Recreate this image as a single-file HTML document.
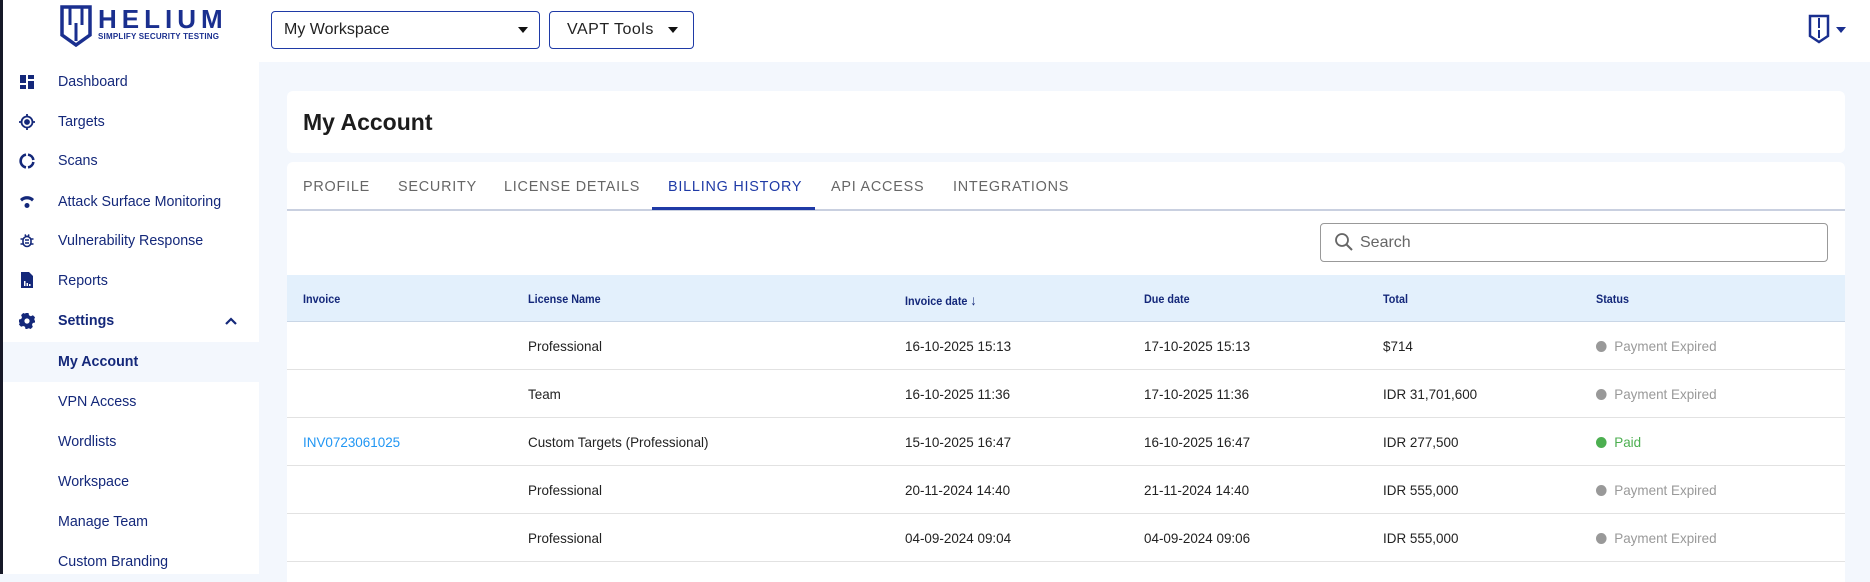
<!DOCTYPE html>
<html><head><meta charset="utf-8"><style>
*{box-sizing:border-box;margin:0;padding:0}
body{width:1870px;height:574px;overflow:hidden;background:#f3f7fd;font-family:"Liberation Sans",Arial,sans-serif;position:relative}
.abs{position:absolute}
#top{left:0;top:0;width:1870px;height:62px;background:#fff}
#side{left:0;top:62px;width:259px;height:512px;background:#fff}
#strip{left:0;top:0;width:3px;height:574px;background:#161827}
.nav{position:absolute;left:58px;font-size:15px;color:#14287a;line-height:20px;transform:scaleX(.95);transform-origin:left}
.ic{position:absolute;left:19px;width:16px;height:16px}
.sel{position:absolute;top:11px;height:38px;border:1px solid #1f3aa6;border-radius:4px;background:#fff;font-size:16px;color:#222;line-height:36px;padding-left:12px}
.caret{position:absolute;top:16px;width:0;height:0;border-left:5px solid transparent;border-right:5px solid transparent;border-top:6px solid #111}
.card{position:absolute;background:#fff;border-radius:6px}
.tab{position:absolute;top:177px;font-size:15px;letter-spacing:.8px;color:#666;line-height:20px;transform:scaleX(.96);transform-origin:left}
.th{position:absolute;font-size:12px;font-weight:bold;color:#14287a;top:292px;transform:scaleX(.9);transform-origin:left}
.row{position:absolute;left:287px;width:1558px;height:48px;border-bottom:1.5px solid #e2e2e2}
.c{position:absolute;top:14px;font-size:14px;color:#222;line-height:20px;transform:scaleX(.96);transform-origin:left}
.st{color:#999}
.dot{display:inline-block;width:11px;height:11px;border-radius:50%;background:#999;margin-right:8px;vertical-align:-1px}
</style></head><body>
<div id="top" class="abs"></div>
<div id="side" class="abs"></div>
<div id="strip" class="abs"></div>

<svg class="abs" style="left:60px;top:5px" width="32" height="42" viewBox="0 0 32 42"><path d="M2 2h28v28l-14 10L2 30z" fill="none" stroke="#1a2f8f" stroke-width="3.5"/><path d="M10 2v18M22 2v18M16 18v18" stroke="#1a2f8f" stroke-width="3"/></svg>
<div class="abs" style="left:98px;top:6px;font-size:26px;font-weight:bold;letter-spacing:5px;color:#1a2f8f;line-height:26px">HELIUM</div>
<div class="abs" style="left:98px;top:32px;font-size:8px;font-weight:bold;color:#1a2f8f;letter-spacing:.2px;line-height:9px">SIMPLIFY SECURITY TESTING</div>

<div class="sel" style="left:271px;width:269px">My Workspace</div>
<div class="caret" style="left:518px;top:27px"></div>
<div class="sel" style="left:549px;width:145px;padding-left:17px;letter-spacing:.5px">VAPT Tools</div>
<div class="caret" style="left:668px;top:27px"></div>

<svg class="abs" style="left:1808px;top:14px" width="22" height="30" viewBox="0 0 22 30"><path d="M2 2h18v20l-9 6-9-6z" fill="none" stroke="#1a2f8f" stroke-width="2.5"/><path d="M11 4v10M11 16v8" stroke="#1a2f8f" stroke-width="2"/></svg>
<div class="caret" style="left:1836px;top:27px;border-top-color:#1a2f8f"></div>

<svg class="ic" style="top:74px" viewBox="0 0 16 16" fill="#14287a"><rect x="1" y="1" width="6" height="8"/><rect x="9" y="1" width="6" height="4"/><rect x="1" y="11" width="6" height="4"/><rect x="9" y="7" width="6" height="8"/></svg>
<div class="nav" style="top:72px">Dashboard</div>
<svg class="ic" style="top:114px" viewBox="0 0 16 16" fill="none" stroke="#14287a" stroke-width="1.8"><circle cx="8" cy="8" r="5.5"/><circle cx="8" cy="8" r="2" fill="#14287a"/><path d="M8 0v2.5M8 13.5V16M0 8h2.5M13.5 8H16"/></svg>
<div class="nav" style="top:112px">Targets</div>
<svg class="ic" style="top:153px" viewBox="0 0 16 16" fill="none" stroke="#14287a" stroke-width="2.6"><path d="M9 1.6A6.5 6.5 0 0 1 14.4 7M14.4 9A6.5 6.5 0 0 1 9 14.4M7 14.4A6.5 6.5 0 0 1 7 1.6"/></svg>
<div class="nav" style="top:151px">Scans</div>
<svg class="ic" style="top:194px" viewBox="0 0 16 16" fill="#14287a"><path d="M1 5a10 10 0 0 1 14 0l-2 2.5a7 7 0 0 0-10 0z"/><circle cx="8" cy="11.5" r="2.5"/></svg>
<div class="nav" style="top:192px">Attack Surface Monitoring</div>
<svg class="ic" style="top:233px" viewBox="0 0 16 16" fill="none" stroke="#14287a" stroke-width="1.6"><rect x="4" y="3.5" width="8" height="10" rx="4"/><path d="M6 7h4M6 10h4M1.5 6h2.5M12 6h2.5M1.5 11h2.5M12 11h2.5M6 1.5l1 2M10 1.5l-1 2"/></svg>
<div class="nav" style="top:231px">Vulnerability Response</div>
<svg class="ic" style="top:272px" viewBox="0 0 16 16" fill="#14287a"><path d="M2 0h8l4 4v12H2z"/><rect x="5" y="9" width="1.5" height="5" fill="#fff"/><rect x="7.5" y="11" width="1.5" height="3" fill="#fff"/><rect x="10" y="12" width="1.5" height="2" fill="#fff"/></svg>
<div class="nav" style="top:271px">Reports</div>
<svg class="ic" style="top:313px" viewBox="0 0 16 16" fill="#14287a"><path d="M6.5 0h3l.5 2.2 1.8 1 2.1-1 2.1 2.1-.8 2 .8 1.8L16 6.5v3l-2.2.5-.8 1.8.8 2.1-2.1 2.1-2-.8-1.8.8L9.5 16h-3L6 13.8 4.2 13l-2.1.8L0 11.6l.8-2L0 9.5v-3l2.2-.5L3 4.2 2.1 2.1 4.2 0l2 .8z"/><circle cx="8" cy="8" r="2.6" fill="#fff"/></svg>
<div class="nav" style="top:311px;font-weight:bold">Settings</div>
<svg class="abs" style="left:224px;top:316px" width="14" height="10" viewBox="0 0 14 10"><path d="M2 8l5-5 5 5" fill="none" stroke="#14287a" stroke-width="2.2"/></svg>
<div class="abs" style="left:3px;top:342px;width:256px;height:40px;background:#f3f7fd"></div>
<div class="nav" style="top:352px;font-weight:bold">My Account</div>
<div class="nav" style="top:392px">VPN Access</div>
<div class="nav" style="top:432px">Wordlists</div>
<div class="nav" style="top:472px">Workspace</div>
<div class="nav" style="top:512px">Manage Team</div>
<div class="nav" style="top:552px">Custom Branding</div>

<div class="card" style="left:287px;top:91px;width:1558px;height:62px"></div>
<div class="abs" style="left:303px;top:109px;font-size:23px;font-weight:bold;color:#1c1c1c">My Account</div>

<div class="card" style="left:287px;top:162px;width:1558px;height:420px;border-radius:6px 6px 0 0"></div>
<div class="abs" style="left:287px;top:209px;width:1558px;height:1.5px;background:#c9d0e0"></div>
<div class="tab" style="left:303px">PROFILE</div>
<div class="tab" style="left:398px">SECURITY</div>
<div class="tab" style="left:504px">LICENSE DETAILS</div>
<div class="tab" style="left:668px;color:#1f3aa6">BILLING HISTORY</div>
<div class="tab" style="left:831px">API ACCESS</div>
<div class="tab" style="left:953px">INTEGRATIONS</div>
<div class="abs" style="left:652px;top:207px;width:163px;height:3px;background:#1f3aa6"></div>

<div class="abs" style="left:1320px;top:223px;width:508px;height:39px;border:1px solid #999;border-radius:4px"></div>
<svg class="abs" style="left:1334px;top:232px" width="20" height="20" viewBox="0 0 20 20"><circle cx="8" cy="8" r="6" fill="none" stroke="#666" stroke-width="1.8"/><path d="M12.5 12.5l5.5 5.5" stroke="#666" stroke-width="2"/></svg>
<div class="abs" style="left:1360px;top:233px;font-size:16px;color:#666;line-height:20px">Search</div>

<div class="abs" style="left:287px;top:275px;width:1558px;height:47px;background:#e3f0fc;border-bottom:1.5px solid #c9d6e6"></div>
<div class="th" style="left:303px">Invoice</div>
<div class="th" style="left:528px">License Name</div>
<div class="th" style="left:905px">Invoice date <span style="font-weight:normal;font-size:14px">↓</span></div>
<div class="th" style="left:1144px">Due date</div>
<div class="th" style="left:1383px">Total</div>
<div class="th" style="left:1596px">Status</div>

<div class="row" style="top:322px"><div class="c" style="left:241px">Professional</div><div class="c" style="left:618px">16-10-2025 15:13</div><div class="c" style="left:857px">17-10-2025 15:13</div><div class="c" style="left:1096px">$714</div><div class="c st" style="left:1309px"><span class="dot"></span>Payment Expired</div></div>
<div class="row" style="top:370px"><div class="c" style="left:241px">Team</div><div class="c" style="left:618px">16-10-2025 11:36</div><div class="c" style="left:857px">17-10-2025 11:36</div><div class="c" style="left:1096px">IDR 31,701,600</div><div class="c st" style="left:1309px"><span class="dot"></span>Payment Expired</div></div>
<div class="row" style="top:418px"><div class="c" style="left:16px;color:#2196f3">INV0723061025</div><div class="c" style="left:241px">Custom Targets (Professional)</div><div class="c" style="left:618px">15-10-2025 16:47</div><div class="c" style="left:857px">16-10-2025 16:47</div><div class="c" style="left:1096px">IDR 277,500</div><div class="c" style="left:1309px;color:#4caf50"><span class="dot" style="background:#4caf50"></span>Paid</div></div>
<div class="row" style="top:466px"><div class="c" style="left:241px">Professional</div><div class="c" style="left:618px">20-11-2024 14:40</div><div class="c" style="left:857px">21-11-2024 14:40</div><div class="c" style="left:1096px">IDR 555,000</div><div class="c st" style="left:1309px"><span class="dot"></span>Payment Expired</div></div>
<div class="row" style="top:514px"><div class="c" style="left:241px">Professional</div><div class="c" style="left:618px">04-09-2024 09:04</div><div class="c" style="left:857px">04-09-2024 09:06</div><div class="c" style="left:1096px">IDR 555,000</div><div class="c st" style="left:1309px"><span class="dot"></span>Payment Expired</div></div>
</body></html>
